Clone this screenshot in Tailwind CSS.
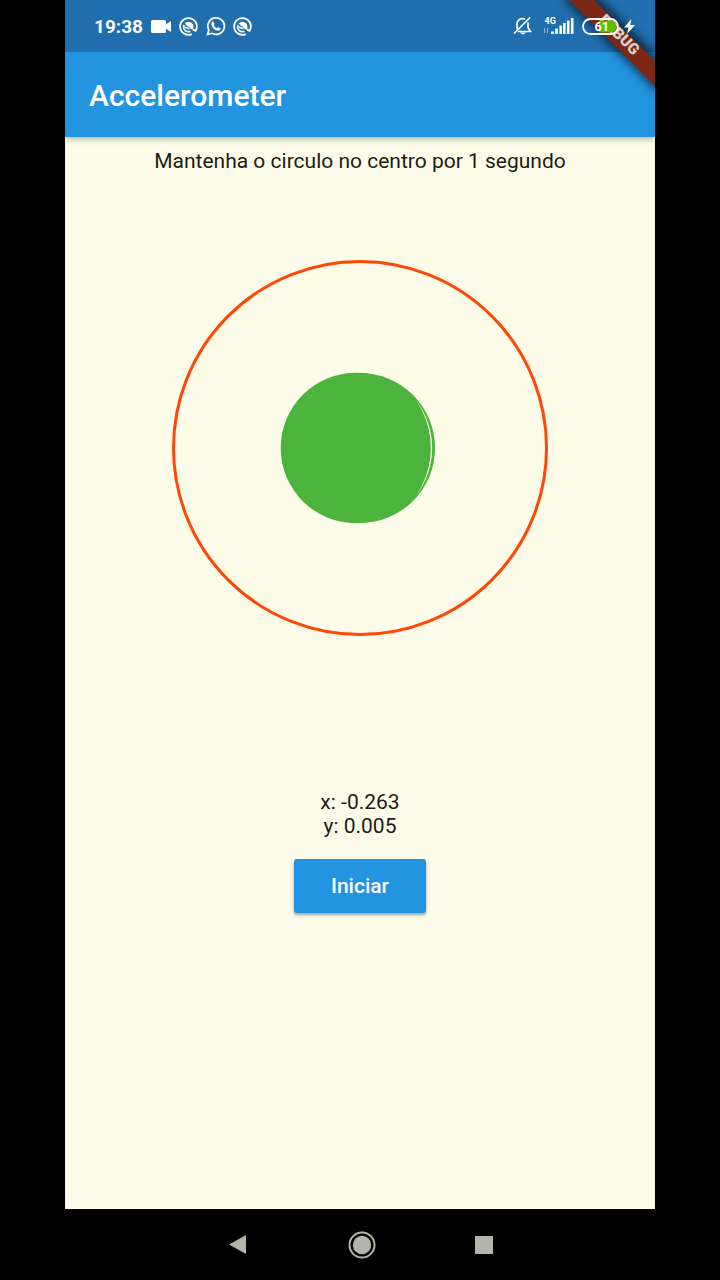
<!DOCTYPE html>
<html lang="pt">
<head>
<meta charset="utf-8">
<title>Accelerometer</title>
<script src="https://cdn.jsdelivr.net/npm/@tailwindcss/browser@4"></script>
</head>
<body class="bg-black font-['Roboto',sans-serif]">
<div class="mx-auto flex h-[1280px] w-[590px] flex-col overflow-hidden bg-black">
  <header class="relative z-10 shrink-0 bg-[#2394e0] shadow-[0_2px_6px_rgba(0,0,0,0.3)]">
    <!-- debug ribbon, below the status icons -->
    <div class="pointer-events-none absolute right-0 top-0 z-10 size-[110px] overflow-hidden">
      <svg class="ml-5 size-[90px] overflow-visible" viewBox="0 0 90 90"><defs><filter id="s" x="-30%" y="-30%" width="160%" height="160%"><feGaussianBlur stdDeviation="5"/></filter></defs><path d="M-4 -4H32L94 58V94z" fill="#000" opacity=".6" filter="url(#s)"/><path d="M4 0H29L90 61V86z" fill="#7c2614"/><text transform="translate(53.500 35.500) rotate(45)" text-anchor="middle" y="4" font-family="Roboto" font-size="15.500" font-weight="900" fill="#d8cfcb">DEBUG</text></svg>
    </div>
    <div class="flex h-[52px] items-center bg-[#206eae] pl-[29px] pr-[20px] text-white">
      <span class="w-[57px] text-[19px] font-bold leading-none">19:38</span>
      <svg class="h-[13px] w-5" viewBox="0 0 20 13" fill="currentColor"><rect width="15" height="13" rx="1.5"/><path d="M14 5l6-4v11l-6-4z"/></svg>
      <svg class="ml-[8px] size-[19px]" viewBox="0 0 20 20" fill="none" stroke="currentColor" stroke-width="1.900"><path d="M13.500 18A8.800 8.800 0 1 1 17.500 14.500L14.500 13"/><path d="M5.300 8.500A5 5 0 0 0 12 15" stroke-width="1.600"/><path d="M6 10.500L11 12.500" stroke-width="1.600"/><path d="M6 7A5.200 5.200 0 0 1 15.200 10.500Q15 12 13.800 13.500z" fill="currentColor" stroke="none"/></svg>
      <svg class="ml-[8px] size-5" viewBox="0 0 20 20" fill="none" stroke="currentColor" stroke-width="1.7"><path d="M1.500 18.500L2.800 14A8.300 8.300 0 1 1 6 17.300z"/><path d="M7 5.300L8.500 8 7.700 9.200Q8.700 11.300 11 12.300L12.200 11.300 14.700 12.600Q14.200 15 12 14.800Q6 13.500 5.300 8Q5.300 5.800 7 5.300z" fill="currentColor" stroke="none"/></svg>
      <svg class="ml-[7px] size-[19px]" viewBox="0 0 20 20" fill="none" stroke="currentColor" stroke-width="1.900"><path d="M13.500 18A8.800 8.800 0 1 1 17.500 14.500L14.500 13"/><path d="M5.300 8.500A5 5 0 0 0 12 15" stroke-width="1.600"/><path d="M6 10.500L11 12.500" stroke-width="1.600"/><path d="M6 7A5.200 5.200 0 0 1 15.200 10.500Q15 12 13.800 13.500z" fill="currentColor" stroke="none"/></svg>
      <svg class="ml-auto h-5 w-[19px]" viewBox="0 0 19 20" fill="none" stroke="currentColor" stroke-width="1.700"><path d="M1 17.500L17 1.500M4 13V8.500Q4 3.500 9 2.500Q10.500 2.500 12 3.200M15 6.500V11.500L17.500 15.500H5"/><path d="M7 16.500h6q-3 4-6 0z" fill="currentColor" stroke="none"/></svg>
      <svg class="ml-[11px] h-5 w-8" viewBox="0 0 32 20" fill="currentColor"><text x="1.500" y="7.500" font-family="Roboto" font-size="9" font-weight="700">4G</text><path d="M1 12h1v5H1zM4 12h1v5H4z" opacity=".5"/><path d="M8 15.500h3V18H8zM12.200 12.500h2.600V18h-2.600zM16.400 9.500H19V18h-2.600zM20 7h2.600v11H20zM23.900 4.500h2.600V18h-2.600zM27.900 2h2.600v16h-2.600z"/></svg>
      <svg class="relative z-20 ml-[7px] h-[17px] w-[37px]" viewBox="0 0 37 17"><path d="M17 2.500h11.500a6 6 0 0 1 0 12H17z" fill="#5cc000"/><rect x="1" y="1" width="35" height="15" rx="7.500" fill="none" stroke="white" stroke-width="1.800"/><text x="12.500" y="13" font-family="Roboto" font-size="12.500" font-weight="700" fill="white">61</text></svg>
      <svg class="relative z-20 ml-[5px] h-[15px] w-[11px]" viewBox="0 0 11 15" fill="currentColor"><path d="M7.500 0L0 8.500h4.500L3 15 11 6H6.200z"/></svg>
    </div>
    <h1 class="flex h-[85px] items-center pl-[24px] pt-[2px] text-[30px] font-medium leading-none text-white">Accelerometer</h1>
  </header>

  <main class="flex h-[1072px] shrink-0 flex-col items-center bg-[#fcfce9] text-[#1c1c12]">
    <p class="mt-[12px] text-[21px] leading-6">Mantenha o circulo no centro por 1 segundo</p>
    <svg class="mt-[87px] size-[376px] shrink-0" viewBox="0 0 376 376">
      <circle cx="188" cy="188" r="186.500" fill="none" stroke="#ff4708" stroke-width="3"/>
      <circle cx="188" cy="188" r="75" fill="#4cb43c"/>
      <circle cx="184" cy="188" r="75.300" fill="#4cb43c"/>
      <path d="M243 139A78.400 78.400 0 0 1 243 237A83.900 83.900 0 0 0 243 139" fill="#fcfce9"/>
    </svg>
    <div class="mt-[154px] text-center text-[21px] leading-6"><p>x: -0.263</p><p>y: 0.005</p></div>
    <button class="mt-[20.5px] h-[54px] w-[132px] rounded-[3px] bg-[#2394e0] pt-[3px] text-[21px] font-medium text-white shadow-[0_2px_3px_rgba(0,0,0,0.35)]">Iniciar</button>
  </main>

  <nav class="flex h-[71px] items-center text-[#b5b4aa]">
    <svg class="ml-[164px] h-[19px] w-[17px]" viewBox="0 0 17 19" fill="currentColor"><path d="M0 9.500L17 0v19z"/></svg>
    <svg class="ml-[102px] size-[28px]" viewBox="0 0 28 28"><circle cx="14" cy="14" r="12.500" fill="none" stroke="currentColor" stroke-width="2"/><circle cx="14" cy="14" r="9.200" fill="currentColor"/></svg>
    <span class="ml-[99px] size-[18px] bg-current"></span>
  </nav>
</div>
</body>
</html>
